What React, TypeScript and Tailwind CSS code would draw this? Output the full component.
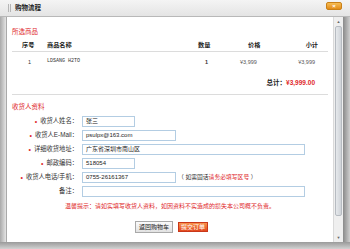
import clsx from 'clsx';

const font = "font-['Liberation_Sans','Noto_Sans_CJK_SC',sans-serif]";

type Field = {
  label: string;
  value: string;
  width: string;
  required?: boolean;
  note?: boolean;
};

const fields: Field[] = [
  {label: '收货人姓名：', value: '张三', width: 'w-[53px]', required: true},
  {label: '收货人E-Mail：', value: 'psulpx@163.com', width: 'w-[94px]', required: true},
  {label: '详细收货地址：', value: '广东省深圳市南山区', width: 'w-[223px]', required: true},
  {label: '邮政编码：', value: '518054', width: 'w-[53px]', required: true},
  {label: '收货人电话/手机：', value: '0755-26161367', width: 'w-[94px]', required: true, note: true},
  {label: '备注：', value: '', width: 'w-[223px]'},
];

function FormRow({field}: {field: Field}) {
  return (
    <div className="flex items-center h-[14px]">
      <div className="w-[66px] flex justify-end items-center gap-[3px] text-[6.3px] text-[#333] whitespace-nowrap">
        {field.required && <span className="text-[#e0282b] text-[7px] leading-none">•</span>}
        <span>{field.label}</span>
      </div>
      <div
        className={clsx(
          'ml-[4px] h-[11px] border border-[#b3cde3] bg-white px-[3px] flex items-center text-[6px] text-[#222] whitespace-nowrap',
          field.width,
        )}
      >
        {field.value}
      </div>
      {field.note && (
        <span className="ml-[2px] text-[5.8px] text-[#333] whitespace-nowrap">
          （ 如需固话<span className="text-[#e0282b]">请务必填写区号</span> ）
        </span>
      )}
    </div>
  );
}

export default function App() {
  return (
    <div className={clsx('w-[350px] h-[249px] flex flex-col bg-[#c9c9c9]', font)}>
      {/* Title bar */}
      <div className="h-[17px] flex items-center bg-gradient-to-b from-[#f4f4f4] to-[#e4e4e4] border-b border-[#b8b8b8]">
        <div className="ml-[8px] w-[3px] h-[8px] border-x border-[#b5b5b5]" />
        <span className="ml-[4px] text-[6.5px] font-bold text-[#222]">购物流程</span>
        <div className="ml-auto mr-[8px] mb-[4px] w-[16px] h-[8px] rounded-[2px] bg-gradient-to-b from-[#f6bd52] to-[#e28c14] border border-[#c98018] flex items-center justify-center text-[6px] font-bold text-white leading-none">
          ×
        </div>
      </div>

      <div className="flex-1 flex min-h-0">
        <div className="w-[6px] bg-gradient-to-r from-[#a9a9a9] to-[#e4e4e4]" />
        {/* Content */}
        <div className="flex-1 bg-white border-l border-[#a9a9a9] px-[5px] pt-[10px] overflow-hidden">
          <div className="h-[10px] flex items-center text-[6.5px] text-[#e0282b]">所选商品</div>

          <div className="mt-[2px] flex items-center h-[13px] border-b border-[#dcdcdc] text-[6.2px] font-bold text-[#222]">
            <span className="w-[35px] pl-[10px]">序号</span>
            <span className="w-[151px]">商品名称</span>
            <span className="w-[50px]">数量</span>
            <span className="w-[55px]">价格</span>
            <span className="flex-1 text-right pr-[10px]">小计</span>
          </div>

          <div className="flex items-center h-[20px] text-[5.5px] text-[#333]">
            <span className="w-[35px] pl-[16px]">1</span>
            <span className="w-[151px] font-['Liberation_Mono',monospace] text-[5px]">LDSANG H2TO</span>
            <span className="w-[42px] pl-[7px] font-bold">1</span>
            <span className="w-[50px] text-[#555]">¥3,999</span>
            <span className="flex-1 text-right pr-[13px] text-[#555]">¥3,999</span>
          </div>

          <div className="flex justify-end items-center h-[22px] pr-[13px] text-[6.5px] font-bold">
            <span className="text-[#222]">总计：</span>
            <span className="text-[#e0282b]">¥3,999.00</span>
          </div>

          <div className="border-t border-[#dcdcdc]" />

          <div className="mt-[7px] h-[10px] flex items-center text-[6.5px] text-[#e0282b]">收货人资料</div>

          <div className="mt-[2px] flex flex-col">
            {fields.map(f => (
              <FormRow key={f.label} field={f} />
            ))}
          </div>

          <div className="mt-[3px] h-[10px] flex items-center pl-[53px] text-[6px] text-[#e0282b] whitespace-nowrap">
            温馨提示：请如实填写收货人资料，如因资料不实造成的损失本公司概不负责。
          </div>

          <div className="mt-[10px] flex items-center gap-[5px] pl-[123px]">
            <div className="h-[12px] w-[38px] flex items-center justify-center border border-[#a9a9a9] bg-gradient-to-b from-[#fbfbfb] to-[#e2e2e2] text-[6px] text-[#222]">
              返回购物车
            </div>
            <div className="h-[10px] w-[30px] flex items-center justify-center border border-[#c9371a] bg-gradient-to-b from-[#f7914a] to-[#e2461c] text-[6px] text-white">
              提交订单
            </div>
          </div>
        </div>

        {/* Scrollbar */}
        <div className="w-[10px] bg-[#efefef] border-l border-[#dadada] flex flex-col">
          <div className="h-[9px] flex items-center justify-center text-[4px] text-[#666]">▲</div>
          <div className="mx-[1px] h-[190px] rounded-[2px] border border-[#b6bbc1] bg-gradient-to-r from-[#e6e9ec] to-[#cfd3d8]" />
          <div className="flex-1" />
          <div className="h-[9px] flex items-center justify-center text-[4px] text-[#666]">▼</div>
        </div>
        <div className="w-[7px] bg-gradient-to-r from-[#8a8a8a] to-[#cfcfcf]" />
      </div>
      <div className="h-[7px] bg-gradient-to-b from-[#9a9a9a] to-[#d2d2d2]" />
    </div>
  );
}
